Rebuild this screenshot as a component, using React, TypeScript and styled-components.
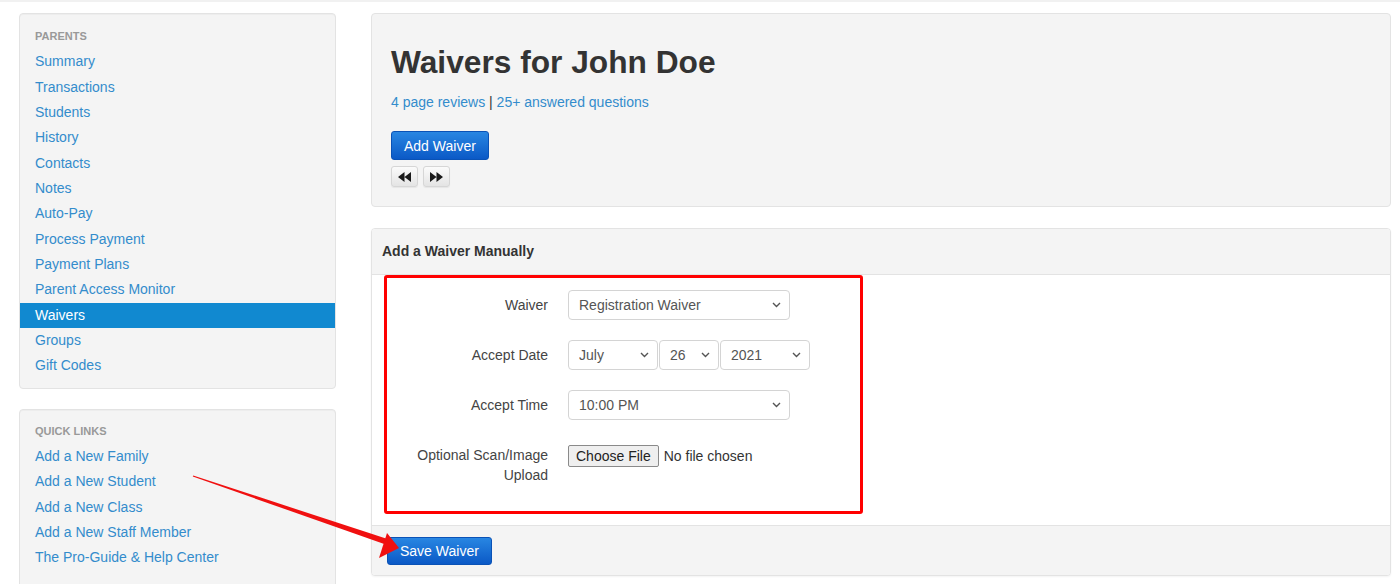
import React from "react";
import styled, { createGlobalStyle } from "styled-components";

const GlobalStyle = createGlobalStyle`
  html, body { margin: 0; padding: 0; background: #ffffff; }
  body { font-family: "Liberation Sans", Arial, sans-serif; font-size: 14px; color: #333333; }
  * { box-sizing: border-box; }
`;

const Page = styled.div`
  position: relative;
  width: 1400px;
  height: 584px;
  overflow: hidden;
  background: #ffffff;
`;

const TopEdge = styled.div`
  height: 2px;
  background: #f1f1f1;
`;

const Layout = styled.div`
  display: grid;
  grid-template-columns: 317px 1020px;
  column-gap: 35px;
  padding: 11px 0 0 19px;
`;

const Sidebar = styled.aside`
  display: flex;
  flex-direction: column;
  gap: 20px;
`;

const Well = styled.div<{ $tall?: boolean }>`
  background: #f4f4f4;
  border: 1px solid #e3e3e3;
  border-radius: 4px;
  box-shadow: inset 0 1px 1px rgba(0, 0, 0, 0.03);
  padding: ${(p) => (p.$tall ? "9px" : "10px")} 0 ${(p) => (p.$tall ? "40px" : "9px")};
`;

const NavHeader = styled.div`
  padding: 0 15px;
  line-height: 25.33px;
  font-size: 11px;
  font-weight: bold;
  text-transform: uppercase;
  color: #999999;
`;

const NavLink = styled.a<{ $active?: boolean }>`
  display: block;
  padding: 0 15px;
  line-height: 25.33px;
  font-size: 14px;
  text-decoration: none;
  color: ${(p) => (p.$active ? "#ffffff" : "#338ccc")};
  background: ${(p) => (p.$active ? "#1189d0" : "transparent")};
  cursor: pointer;
`;

const Main = styled.main`
  display: flex;
  flex-direction: column;
  gap: 21px;
`;

const HeroPanel = styled.section`
  background: #f4f4f4;
  border: 1px solid #e3e3e3;
  border-radius: 4px;
  padding: 28px 19px 19px;
`;

const Title = styled.h1`
  margin: 0;
  font-size: 31.7px;
  line-height: 40px;
  font-weight: bold;
  color: #333333;
`;

const SubLinks = styled.div`
  margin-top: 10px;
  line-height: 20px;
  font-size: 14px;
  color: #333333;
`;

const SubLink = styled.a`
  color: #338ccc;
  text-decoration: none;
`;

const PrimaryButton = styled.button<{ $h?: number }>`
  display: inline-block;
  height: ${(p) => p.$h ?? 29}px;
  padding: 0 12px;
  font-family: "Liberation Sans", Arial, sans-serif;
  font-size: 14px;
  color: #ffffff;
  background: linear-gradient(to bottom, #2886e2 0%, #0b59c6 100%);
  border: 1px solid #0a52b6;
  border-radius: 3px;
  cursor: pointer;
`;

const ButtonRow = styled.div`
  margin-top: 19px;
  display: flex;
  flex-direction: column;
  align-items: flex-start;
  gap: 6px;
`;

const Pager = styled.div`
  display: flex;
  gap: 5px;
`;

const PagerButton = styled.button`
  width: 27px;
  height: 21px;
  padding: 0;
  display: flex;
  align-items: center;
  justify-content: center;
  background: linear-gradient(to bottom, #fbfbfb 0%, #e4e4e4 100%);
  border: 1px solid #d6d6d6;
  border-radius: 3px;
  box-shadow: 0 1px 1px rgba(0, 0, 0, 0.06);
  cursor: pointer;
`;

const FormPanel = styled.section`
  background: #ffffff;
  border: 1px solid #e3e3e3;
  border-radius: 4px;
  box-shadow: 0 1px 2px rgba(0, 0, 0, 0.05);
  overflow: hidden;
`;

const PanelHeading = styled.div`
  height: 46px;
  display: flex;
  align-items: center;
  padding: 0 0 2px 10px;
  background: #f4f4f4;
  border-bottom: 1px solid #e3e3e3;
  font-size: 14px;
  font-weight: bold;
  color: #333333;
`;

const PanelBody = styled.div`
  padding: 0 12px 11px;
`;

const Highlight = styled.div`
  width: 479px;
  border: 3px solid #ff0000;
  border-radius: 3px;
  padding: 12px 0 26px;
  display: flex;
  flex-direction: column;
  gap: 20px;
`;

const FormRow = styled.div`
  display: grid;
  grid-template-columns: 161px 1fr;
  column-gap: 20px;
  align-items: start;
`;

const Label = styled.label`
  padding-top: 5px;
  line-height: 20px;
  text-align: right;
  font-size: 14px;
  color: #444444;
`;

const Controls = styled.div`
  display: flex;
  gap: 1px;
`;

const SelectWrap = styled.div<{ $w: number }>`
  position: relative;
  width: ${(p) => p.$w}px;
`;

const Select = styled.select`
  appearance: none;
  -webkit-appearance: none;
  width: 100%;
  height: 30px;
  padding: 0 24px 0 10px;
  font-family: "Liberation Sans", Arial, sans-serif;
  font-size: 14px;
  color: #555555;
  background: #ffffff;
  border: 1px solid #d4d4d4;
  border-radius: 4px;
  outline: none;
`;

const Chevron = styled.svg`
  position: absolute;
  right: 9px;
  top: 12px;
  width: 9px;
  height: 6px;
  pointer-events: none;
`;

const FileInput = styled.input`
  margin-top: 5px;
  font-family: "Liberation Sans", Arial, sans-serif;
  font-size: 14px;
  color: #333333;
  &::file-selector-button {
    height: 22px;
    margin-right: 5px;
    padding: 0 7px;
    font-family: "Liberation Sans", Arial, sans-serif;
    font-size: 14px;
    color: #222222;
    background: #efefef;
    border: 1px solid #8a8a8a;
    border-radius: 2px;
  }
`;

const PanelFooter = styled.div`
  padding: 11px 15px 10px;
  background: #f4f4f4;
  border-top: 1px solid #e3e3e3;
`;

const Annotation = styled.svg`
  position: absolute;
  left: 0;
  top: 0;
  width: 1400px;
  height: 584px;
  pointer-events: none;
`;

const DropDown: React.FC<{ w: number; value: string }> = ({ w, value }) => (
  <SelectWrap $w={w}>
    <Select defaultValue={value}>
      <option>{value}</option>
    </Select>
    <Chevron viewBox="0 0 9 6">
      <path d="M1 1l3.5 3.5L8 1" fill="none" stroke="#555" strokeWidth="1.4" />
    </Chevron>
  </SelectWrap>
);

const parentLinks = [
  "Summary",
  "Transactions",
  "Students",
  "History",
  "Contacts",
  "Notes",
  "Auto-Pay",
  "Process Payment",
  "Payment Plans",
  "Parent Access Monitor",
  "Waivers",
  "Groups",
  "Gift Codes",
];

const quickLinks = [
  "Add a New Family",
  "Add a New Student",
  "Add a New Class",
  "Add a New Staff Member",
  "The Pro-Guide & Help Center",
];

export default function App() {
  return (
    <Page>
      <GlobalStyle />
      <TopEdge />
      <Layout>
        <Sidebar>
          <Well>
            <NavHeader>Parents</NavHeader>
            {parentLinks.map((l) => (
              <NavLink key={l} $active={l === "Waivers"}>
                {l}
              </NavLink>
            ))}
          </Well>
          <Well $tall>
            <NavHeader>Quick Links</NavHeader>
            {quickLinks.map((l) => (
              <NavLink key={l}>{l}</NavLink>
            ))}
          </Well>
        </Sidebar>
        <Main>
          <HeroPanel>
            <Title>Waivers for John Doe</Title>
            <SubLinks>
              <SubLink>4 page reviews</SubLink> | <SubLink>25+ answered questions</SubLink>
            </SubLinks>
            <ButtonRow>
              <PrimaryButton>Add Waiver</PrimaryButton>
              <Pager>
                <PagerButton aria-label="Previous">
                  <svg width="13" height="10" viewBox="0 0 13 10">
                    <path d="M6.5 0v10L0 5z M13 0v10L6.5 5z" fill="#1a1a1a" />
                  </svg>
                </PagerButton>
                <PagerButton aria-label="Next">
                  <svg width="13" height="10" viewBox="0 0 13 10">
                    <path d="M0 0v10l6.5-5z M6.5 0v10L13 5z" fill="#1a1a1a" />
                  </svg>
                </PagerButton>
              </Pager>
            </ButtonRow>
          </HeroPanel>
          <FormPanel>
            <PanelHeading>Add a Waiver Manually</PanelHeading>
            <PanelBody>
              <Highlight>
                <FormRow>
                  <Label>Waiver</Label>
                  <Controls>
                    <DropDown w={222} value="Registration Waiver" />
                  </Controls>
                </FormRow>
                <FormRow>
                  <Label>Accept Date</Label>
                  <Controls>
                    <DropDown w={90} value="July" />
                    <DropDown w={60} value="26" />
                    <DropDown w={90} value="2021" />
                  </Controls>
                </FormRow>
                <FormRow>
                  <Label>Accept Time</Label>
                  <Controls>
                    <DropDown w={222} value="10:00 PM" />
                  </Controls>
                </FormRow>
                <FormRow>
                  <Label>
                    Optional Scan/Image
                    <br />
                    Upload
                  </Label>
                  <Controls>
                    <FileInput type="file" />
                  </Controls>
                </FormRow>
              </Highlight>
            </PanelBody>
            <PanelFooter>
              <PrimaryButton $h={28}>Save Waiver</PrimaryButton>
            </PanelFooter>
          </FormPanel>
        </Main>
      </Layout>
      <Annotation viewBox="0 0 1400 584">
        <polygon
          points="192.8,476.6 193.2,475.4 386,538.6 384.2,544"
          fill="#f01010"
        />
        <polygon points="399,548 387,533 379,558" fill="#f01010" />
      </Annotation>
    </Page>
  );
}
